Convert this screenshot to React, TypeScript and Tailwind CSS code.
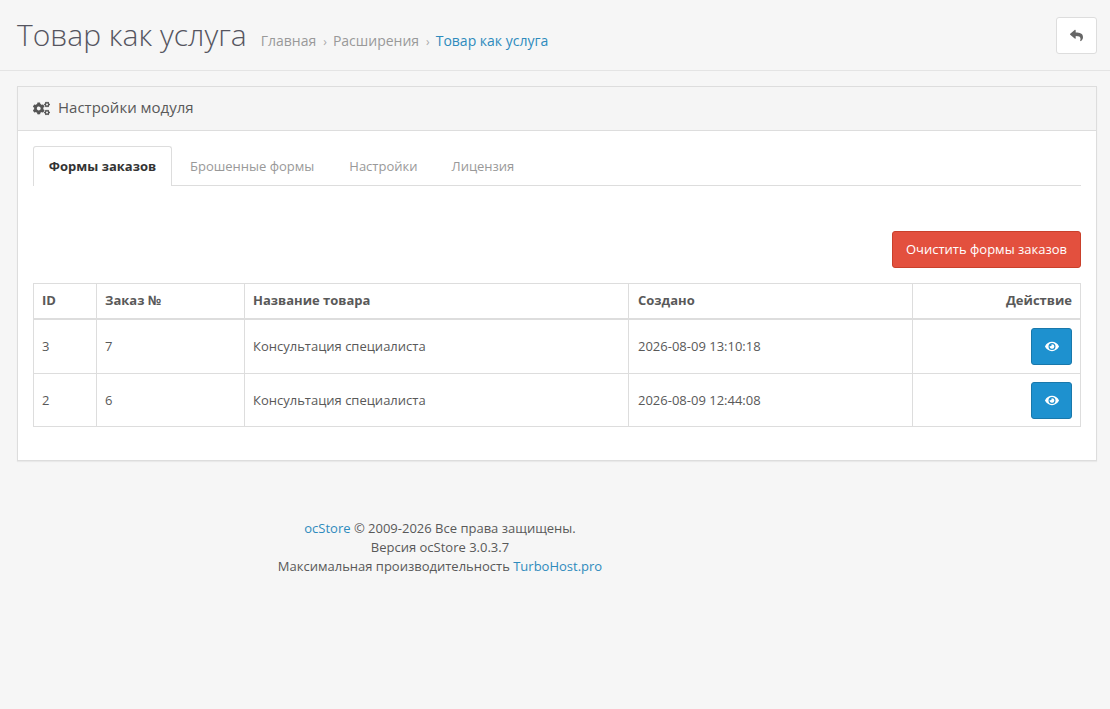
import { FaCogs, FaEye, FaReply } from "react-icons/fa";

const ROWS = [
  { id: 3, order: 7, name: "Консультация специалиста", created: "2026-08-09 13:10:18", h: "h-[55px]", text: "" },
  { id: 2, order: 6, name: "Консультация специалиста", created: "2026-08-09 12:44:08", h: "h-[53px]", text: "pt-[2px]" },
];

const cell = "border border-[#dddddd] px-2 text-left align-middle";

export default function App() {
  return (
    <div className="min-h-[709px] bg-[#f6f6f6] font-['Open_Sans',sans-serif] text-[13px] text-[#595959]">
      {/* Page header */}
      <header className="flex h-[71px] items-center justify-between border-b border-[#e4e4e4] pl-[17px] pr-[13px]">
        <div className="mb-[2px] flex items-baseline">
          <h1 className="text-[30px] leading-[33px] font-light text-[#55555f]">Товар как услуга</h1>
          <nav className="ml-[14px] flex items-baseline text-[14px] text-[#999999]">
            <span>Главная</span>
            <span className="ml-[7px] mr-[6px] text-[12px] text-[#aaaaaa]">›</span>
            <span>Расширения</span>
            <span className="ml-[7px] mr-[6px] text-[12px] text-[#aaaaaa]">›</span>
            <span className="text-[#2e8bbd]">Товар как услуга</span>
          </nav>
        </div>
        <button className="flex h-[37px] w-[41px] items-center justify-center rounded-[3px] border border-[#dddddd] bg-white text-[#666666]">
          <FaReply className="h-[13px] w-[13px]" />
        </button>
      </header>

      <main className="pl-[17px] pr-[13px] pt-[15px]">
        <section className="border border-[#dddddd] bg-white shadow-[0_1px_1px_rgba(0,0,0,0.05)]">
          <div className="flex h-[44px] items-center gap-[8px] border-b border-[#dddddd] bg-[#f5f5f5] px-[15px]">
            <FaCogs className="h-[17px] w-[17px] text-[#555555]" />
            <h3 className="mb-[2px] text-[15px] text-[#595959]">Настройки модуля</h3>
          </div>

          <div className="px-[15px] pt-[15px] pb-[33px]">
            {/* Tabs */}
            <ul className="flex h-[40px] border-b border-[#dddddd] text-[13px] text-[#999999]">
              <li className="flex h-[40px] w-[139px] items-center justify-center rounded-t-[3px] border border-b-0 border-[#dddddd] bg-white font-bold text-[#333333]">
                Формы заказов
              </li>
              <li className="ml-[18px] flex h-[40px] items-center pt-[2px]">Брошенные формы</li>
              <li className="ml-[35px] flex h-[40px] items-center pt-[2px]">Настройки</li>
              <li className="ml-[34px] flex h-[40px] items-center pt-[2px]">Лицензия</li>
            </ul>

            <div className="mt-[45px] flex justify-end">
              <button className="h-[37px] w-[189px] rounded-[3px] border border-[#c9402b] bg-[#e3503e] text-[13px] text-white">
                Очистить формы заказов
              </button>
            </div>

            <table className="mt-[15px] w-[1047px] table-fixed border-collapse">
              <colgroup>
                <col className="w-[63px]" />
                <col className="w-[148px]" />
                <col className="w-[384px]" />
                <col className="w-[284px]" />
                <col className="w-[168px]" />
              </colgroup>
              <thead>
                <tr className="h-[35px] font-bold">
                  <th className={`${cell} border-b-2`}>ID</th>
                  <th className={`${cell} border-b-2`}>Заказ №</th>
                  <th className={`${cell} border-b-2`}>Название товара</th>
                  <th className={`${cell} border-b-2 pl-[9px]`}>Создано</th>
                  <th className={`${cell} border-b-2 text-right`}>Действие</th>
                </tr>
              </thead>
              <tbody>
                {ROWS.map((row) => (
                  <tr key={row.id} className={row.h}>
                    <td className={`${cell} ${row.text}`}>{row.id}</td>
                    <td className={`${cell} ${row.text}`}>{row.order}</td>
                    <td className={`${cell} ${row.text}`}>{row.name}</td>
                    <td className={`${cell} ${row.text} pl-[9px]`}>{row.created}</td>
                    <td className={cell}>
                      <div className="flex justify-end">
                        <button className="flex h-[37px] w-[41px] items-center justify-center rounded-[3px] border border-[#1978ab] bg-[#1e91cf] text-white">
                          <FaEye className="h-[13px] w-[14px]" />
                        </button>
                      </div>
                    </td>
                  </tr>
                ))}
              </tbody>
            </table>
          </div>
        </section>
      </main>

      <footer className="mt-[58px] w-[880px] text-center leading-[19px]">
        <p>
          <a className="text-[#2e8bbd]">ocStore</a> © 2009-2026 Все права защищены.
        </p>
        <p>Версия ocStore 3.0.3.7</p>
        <p>
          Максимальная производительность <a className="text-[#2e8bbd]">TurboHost.pro</a>
        </p>
      </footer>
    </div>
  );
}
